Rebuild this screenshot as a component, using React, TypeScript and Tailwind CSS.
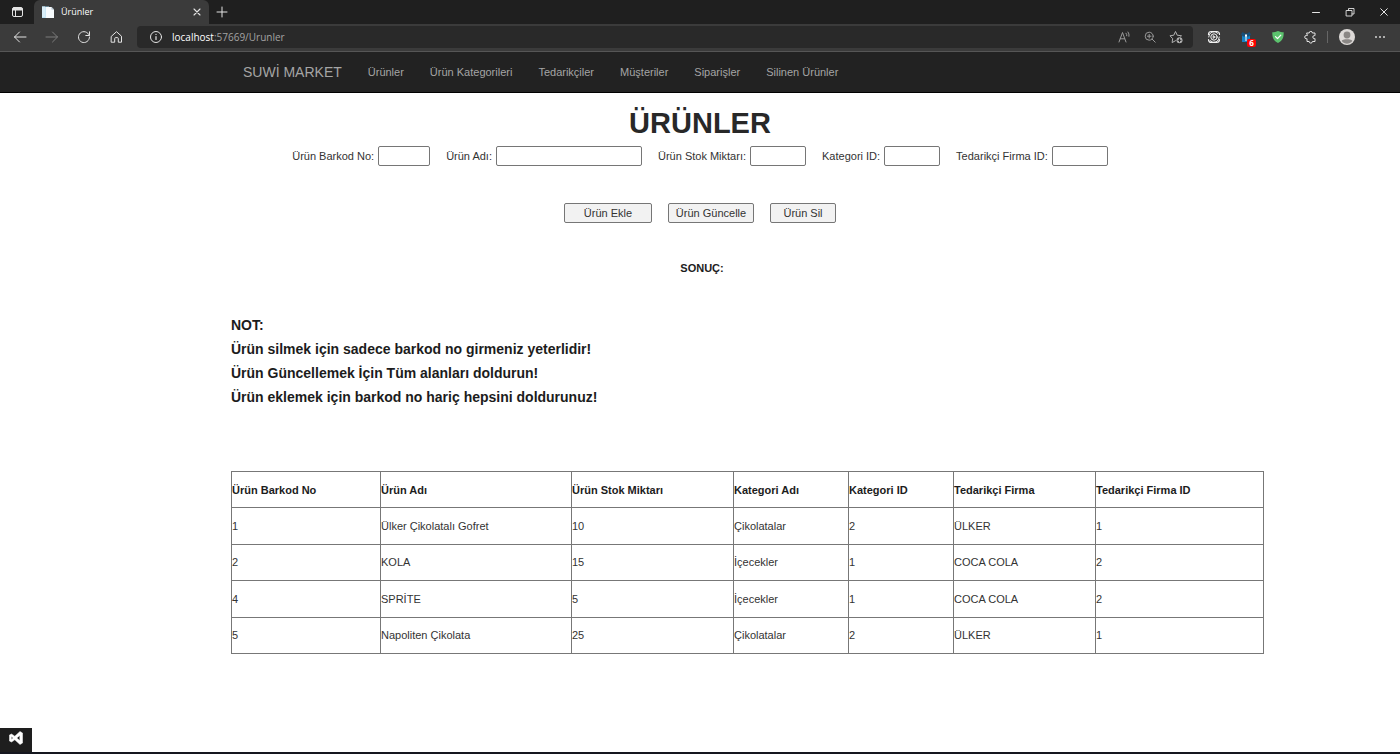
import React, { ReactNode } from 'react';

interface Product {
  barcode: number;
  name: string;
  stock: number;
  category: string;
  categoryId: number;
  supplier: string;
  supplierId: number;
}

const products: Product[] = [
  { barcode: 1, name: 'Ülker Çikolatalı Gofret', stock: 10, category: 'Çikolatalar', categoryId: 2, supplier: 'ÜLKER', supplierId: 1 },
  { barcode: 2, name: 'KOLA', stock: 15, category: 'İçecekler', categoryId: 1, supplier: 'COCA COLA', supplierId: 2 },
  { barcode: 4, name: 'SPRİTE', stock: 5, category: 'İçecekler', categoryId: 1, supplier: 'COCA COLA', supplierId: 2 },
  { barcode: 5, name: 'Napoliten Çikolata', stock: 25, category: 'Çikolatalar', categoryId: 2, supplier: 'ÜLKER', supplierId: 1 },
];

const navLinks = ['Ürünler', 'Ürün Kategorileri', 'Tedarikçiler', 'Müşteriler', 'Siparişler', 'Silinen Ürünler'];

const fields = [
  { id: 'barkod', label: 'Ürün Barkod No:', width: 'w-[52px]' },
  { id: 'ad', label: 'Ürün Adı:', width: 'w-[146px]' },
  { id: 'stok', label: 'Ürün Stok Miktarı:', width: 'w-[56px]' },
  { id: 'kategori', label: 'Kategori ID:', width: 'w-[56px]' },
  { id: 'firma', label: 'Tedarikçi Firma ID:', width: 'w-[56px]' },
];

const actions = [
  { label: 'Ürün Ekle', width: 'w-[88px]' },
  { label: 'Ürün Güncelle', width: 'w-[86px]' },
  { label: 'Ürün Sil', width: 'w-[66px]' },
];

const columns = [
  { title: 'Ürün Barkod No', width: 'w-[149px]' },
  { title: 'Ürün Adı', width: 'w-[191px]' },
  { title: 'Ürün Stok Miktarı', width: 'w-[162px]' },
  { title: 'Kategori Adı', width: 'w-[115px]' },
  { title: 'Kategori ID', width: 'w-[105px]' },
  { title: 'Tedarikçi Firma', width: 'w-[142px]' },
  { title: 'Tedarikçi Firma ID', width: 'w-[168px]' },
];

interface IconButtonProps {
  label: string;
  children: ReactNode;
  className?: string;
}

function IconButton({ label, children, className = 'text-[#e4e4e4]' }: IconButtonProps) {
  return (
    <button type="button" aria-label={label} className={`flex h-5 w-4 shrink-0 items-center justify-center ${className}`}>
      <svg viewBox="0 0 16 16" className="h-4 w-4" fill="none" stroke="currentColor" strokeLinecap="round" strokeLinejoin="round">
        {children}
      </svg>
    </button>
  );
}

function TabStrip() {
  return (
    <div className="flex h-6 items-stretch bg-[#1f1f1f]">
      <div className="flex w-[34px] items-center justify-center">
        <IconButton label="Sekme eylemleri">
          <rect x="3.5" y="3.5" width="10" height="9" rx="1.5" />
          <path d="M4 4.600h9M4 5.800h9" strokeWidth="1.200" />
          <path d="M6.500 6v6.500" />
        </IconButton>
      </div>

      {/* Aktif sekme */}
      <div className="flex w-[175px] items-center rounded-t-md bg-[#3b3b3b] pr-1 pl-2">
        <svg viewBox="0 0 12 12" className="h-3 w-3">
          <path d="M0 .5h7V12H0z" fill="#9fd3ec" />
          <path d="M0 .5h3v11H0z" fill="#d9eef8" />
          <path d="M3.500 1h6L12 3.500V12H3.500z" fill="#f8fbfd" />
          <path d="M9.500 1v2.500H12z" fill="#a9bcc8" />
        </svg>
        <span className="ml-[7px] flex-1 text-[9px] leading-3 text-white">Ürünler</span>
        <IconButton label="Sekmeyi kapat">
          <path d="m5 5 6 6m0-6-6 6" strokeWidth="1.100" />
        </IconButton>
      </div>
      <div className="flex items-center pl-[5px]">
        <IconButton label="Yeni sekme">
          <path d="M8 3v10M3 8h10" />
        </IconButton>
      </div>

      {/* Pencere düğmeleri */}
      <div className="ml-auto flex items-center gap-[18px] pr-2">
        <IconButton label="Simge durumuna küçült">
          <path d="M4.500 8.500h7" />
        </IconButton>
        <IconButton label="Önceki boyut">
          <path d="M4.500 6.500h5.500v5.500H4.500zM6.500 6.500V4.500h5.500v5.500H10" strokeWidth=".9" />
        </IconButton>
        <IconButton label="Kapat">
          <path d="m4.700 4.700 6.600 6.600m0-6.600-6.600 6.600" />
        </IconButton>
      </div>
    </div>
  );
}

function Toolbar() {
  return (
    <div className="flex h-7 items-center border-b border-[#565656] bg-[#3b3b3b] px-3 pb-px">
      <div className="flex gap-4">
        <IconButton label="Geri">
          <path d="M14 8H2.500M7.500 3 2.500 8l5 5" />
        </IconButton>
        <IconButton label="İleri" className="text-[#7c7c7c]">
          <path d="M2 8h11.500M8.500 3l5 5-5 5" />
        </IconButton>
        <IconButton label="Yenile">
          <path d="M13.200 6.300A5.500 5.500 0 1 0 13.500 8M13.500 2.800v3.700H9.800" />
        </IconButton>
        <IconButton label="Giriş">
          <path d="M3.500 7.200 8.500 2.700l5 4.500v6h-3.200V9.600a1 1 0 0 0-1-1H7.700a1 1 0 0 0-1 1v3.600H3.500z" />
        </IconButton>
      </div>

      {/* Adres çubuğu */}
      <div className="ml-[13px] flex h-[22px] flex-1 items-center rounded-sm bg-[#292929] pr-[9px] pl-[11px]">
        <IconButton label="Site bilgileri">
          <circle cx="8" cy="8" r="5.500" />
          <path d="M8 7.500v3M8 5.300v.2" strokeWidth="1.200" />
        </IconButton>
        <div className="ml-2 flex-1 text-[10px] leading-4 text-[#a3a3a3]">
          <span className="text-white">localhost</span>:57669/Urunler
        </div>
        <div className="flex gap-[10px]">
          <IconButton label="Sesli oku" className="text-[#9a9a9a]">
            <path d="m3 13 3.500-9.500L10 13M4.300 9.800h4.400M10 4.200a3 3 0 0 1 .8 2.600M12 3a5 5 0 0 1 1 4.300" />
          </IconButton>
          <IconButton label="Yakınlaştır" className="text-[#9a9a9a]">
            <circle cx="7.200" cy="7.200" r="4" />
            <path d="m10.200 10.200 3 3M5.400 7.200H9M7.200 5.400V9" />
          </IconButton>
          <IconButton label="Sık kullanılanlara ekle" className="text-[#b0b0b0]">
            <path d="m7.500 11.700-3.400 1.900.6-3.900L2 6.800l3.800-.6L7.500 2.500l1.700 3.700 4.300.6-.9.900" />
            <circle cx="11.500" cy="11.300" r="3" fill="currentColor" stroke="none" />
            <path d="M11.500 9.800v3M10 11.300h3" stroke="#292929" />
          </IconButton>
        </div>
      </div>

      {/* Uzantılar */}
      <div className="ml-[13px] flex items-center gap-4">
        <IconButton label="Video uzantısı" className="text-[#f2f2f2]">
          <path d="M2.500 5.500c0-2 1-3 3-3h5c2 0 3 1 3 3M13.500 10.500c0 2-1 3-3 3h-5c-2 0-3-1-3-3" strokeWidth="1.200" />
          <path d="M2.700 8a5.300 5.300 0 0 1 9-3.800M13.300 8a5.300 5.300 0 0 1-9 3.800" />
          <circle cx="8" cy="8" r="3.200" />
          <path d="m7.300 6.600 2.100 1.400-2.100 1.400z" fill="currentColor" strokeWidth=".6" />
        </IconButton>
        <div className="relative">
          <IconButton label="Bildirimler uzantısı">
            <path d="M4 6h8v7H4z" fill="#1583c8" stroke="none" />
            <path d="M3 5.500 4.500 3 7 4.500h2L11.500 3 13 5.500 11 7.500H5z" fill="#174f78" stroke="none" />
            <path d="M7 5.500h2v2h-.5V12h-1V7.500H7z" fill="#fff" stroke="none" />
          </IconButton>
          <span className="absolute top-[12px] left-[9px] flex h-2 w-[9px] items-center justify-center rounded-xs bg-[#f00] text-[8px] font-bold text-white">6</span>
        </div>
        <IconButton label="Koruma uzantısı">
          <path d="M8 2c2 1 3.700 1.200 5.700 1.200 0 5-.7 8-5.700 10.800-5-2.800-5.700-5.800-5.700-10.800C4.300 3.200 6 3 8 2z" fill="#5cc36e" stroke="none" />
          <path d="m5.500 7.600 2 2 3.300-3.500" stroke="#fff" strokeWidth="1.300" />
        </IconButton>
        <IconButton label="Uzantılar">
          <path d="M5 4h2.200a1.600 1.600 0 0 1 3.200 0H13v2.600h-.7a1.500 1.500 0 0 0 0 3H13V12.500h-2.600a1.600 1.600 0 0 1-3.200 0H5V9.700H4.300a1.600 1.600 0 0 1 0-3.200H5z" />
        </IconButton>
      </div>
      <div className="ml-[9px] h-3 w-px bg-[#666666]" />
      <button type="button" aria-label="Profil" className="ml-[11px]">
        <svg viewBox="0 0 16 16" className="h-4 w-4">
          <circle cx="8" cy="8" r="8" fill="#dddad8" />
          <circle cx="8" cy="6" r="3.400" fill="#8a8785" />
          <path d="M2.700 12c0-2.400 10.600-2.400 10.600 0C10.500 15.500 5.500 15.500 2.700 12z" fill="#8a8785" />
        </svg>
      </button>
      <div className="ml-[17px] flex">
        <IconButton label="Ayarlar">
          <path d="M4 8h.01M8 8h.01M12 8h.01" strokeWidth="1.800" />
        </IconButton>
      </div>
    </div>
  );
}

function SiteNav() {
  return (
    <nav className="border-b border-black bg-[#222222] text-[#a5a5a5]">
      <div className="mx-auto flex h-10 max-w-[938px] items-center gap-[26px] px-3 text-[11px]">
        <a href="#" className="text-[14px]">SUWİ MARKET</a>
        {navLinks.map((link) => (
          <a key={link} href="#">{link}</a>
        ))}
      </div>
    </nav>
  );
}

function ProductForm() {
  return (
    <form onSubmit={(e) => e.preventDefault()}>
      <div className="mt-[7px] flex justify-center gap-4">
        {fields.map((field) => (
          <div key={field.id} className="flex shrink-0 items-center gap-1">
            <label htmlFor={field.id}>{field.label}</label>
            <input id={field.id} type="text" className={`h-5 rounded-xs border border-[#767676] px-1 ${field.width}`} />
          </div>
        ))}
      </div>
      <div className="mt-[37px] flex justify-center gap-4">
        {actions.map((action) => (
          <button key={action.label} type="button" className={`h-5 rounded-xs border border-[#767676] bg-[#f2f2f2] whitespace-nowrap ${action.width}`}>
            {action.label}
          </button>
        ))}
      </div>
    </form>
  );
}

function ProductTable() {
  return (
    <table className="mt-[62px] h-[183px] w-[1032px] table-fixed border-collapse text-left">
      <thead>
        <tr className="h-9">
          {columns.map((col) => (
            <th key={col.title} className={`border border-[#777777] font-bold text-[#1c1c1c] ${col.width}`}>{col.title}</th>
          ))}
        </tr>
      </thead>
      <tbody>
        {products.map((p) => (
          <tr key={p.barcode} className="h-9">
            {[p.barcode, p.name, p.stock, p.category, p.categoryId, p.supplier, p.supplierId].map((value, i) => (
              <td key={i} className="border border-[#777777]">{value}</td>
            ))}
          </tr>
        ))}
      </tbody>
    </table>
  );
}

export default function App() {
  return (
    <div className="flex min-h-screen flex-col bg-white font-['Liberation_Sans',Arial,sans-serif] text-[11px] leading-4 text-[#333333]">
      <header>
        <div className="font-['Open_Sans','Noto_Sans',sans-serif]">
          <TabStrip />
          <Toolbar />
        </div>
        <SiteNav />
      </header>

      <main className="mx-auto w-full max-w-[938px] pt-[14px]">
        <h1 className="text-center text-[29px] leading-8 font-bold text-[#282828]">ÜRÜNLER</h1>
        <ProductForm />
        <p className="mt-[37px] pl-1 text-center font-bold text-[#1c1c1c]">SONUÇ:</p>
        <div className="mt-[37px] text-[14px] leading-6 font-bold text-[#1c1c1c]">
          <p>NOT:</p>
          <p>Ürün silmek için sadece barkod no girmeniz yeterlidir!</p>
          <p>Ürün Güncellemek İçin Tüm alanları doldurun!</p>
          <p>Ürün eklemek için barkod no hariç hepsini doldurunuz!</p>
        </div>
        <ProductTable />
      </main>

      <footer className="mt-auto border-b-2 border-[#15171f]">
        <div className="flex h-6 w-8 items-center justify-center bg-[#1e1e1e] pb-1">
          <svg viewBox="0 0 16 16" className="h-4 w-4" role="img" aria-label="Visual Studio">
            <path
              d="M12 1.500 6.800 6.200 3.500 4 1.500 5v6l2 1 3.300-2.200 5.200 4.700 2.500-1.500V3zM3.400 6.400 5.200 8 3.400 9.600zM11.800 5.400v5.200L8.800 8z"
              fill="#ffffff"
              stroke="#ffffff"
              strokeWidth=".5"
              strokeLinejoin="round"
              fillRule="evenodd"
            />
          </svg>
        </div>
      </footer>
    </div>
  );
}
